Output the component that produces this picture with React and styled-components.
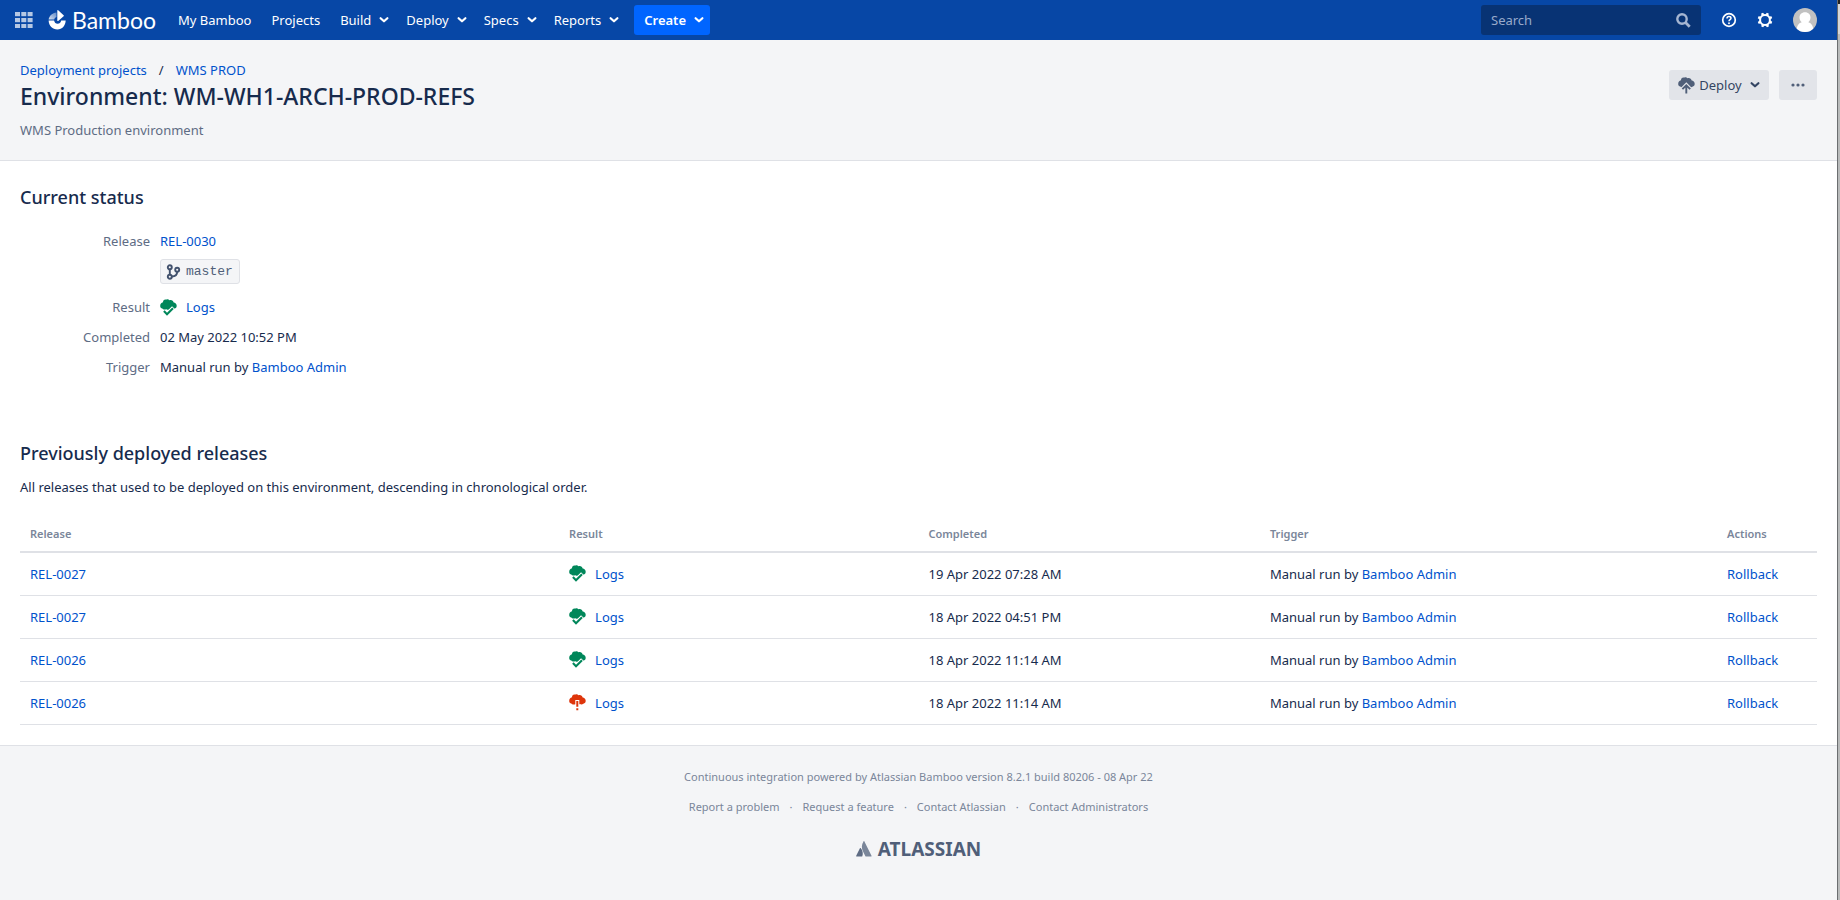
import React from 'react';
import styled, { createGlobalStyle } from 'styled-components';

const GlobalStyle = createGlobalStyle`
  body {
    margin: 0;
    background: #fff;
    color: #172b4d;
    font-family: "Noto Sans", "Open Sans", sans-serif;
    font-size: 13px;
    line-height: 20px;
  }

  * {
    box-sizing: border-box;
  }

  button, input {
    font: inherit;
  }
`;

const Frame = styled.div`
  display: flex;
  min-height: 100vh;
`;

const Page = styled.div`
  flex: 1;
  min-width: 0;
  display: flex;
  flex-direction: column;
`;

const Edge = styled.div`
  width: 3px;
  border-left: 1px solid #6b6e70;
  background: linear-gradient(#222 4px, #d5d7d8 4px, #d5d7d8 34px, #b9bbbb 34px);
`;

const Header = styled.header`
  display: flex;
  align-items: center;
  justify-content: space-between;
  height: 40px;
  padding: 0 20px 0 15px;
  background: #0747a6;
  color: #deebff;
`;

const HeaderGroup = styled.div`
  display: flex;
  align-items: center;
`;

const SwitcherButton = styled.button`
  display: flex;
  margin-right: 15px;
  padding: 0;
  border: 0;
  background: none;
`;

const Brand = styled.a`
  display: flex;
  align-items: center;
  gap: 5px;
  margin-right: 12px;
  color: #fff;
  font-family: Lato, "Open Sans", sans-serif;
  font-size: 23px;
  line-height: 30px;
  text-decoration: none;
`;

const NavLink = styled.a`
  padding: 0 10px;
  color: #fff;
  line-height: 30px;
  text-decoration: none;
`;

const NavButton = styled.button`
  display: flex;
  align-items: center;
  gap: 8px;
  height: 30px;
  margin-left: ${props => (props.$primary ? '8px' : '0')};
  padding: 0 ${props => (props.$primary ? '6px' : '7px')} 0 10px;
  border: 0;
  border-radius: 3px;
  background: ${props => (props.$primary ? '#0065ff' : 'none')};
  color: #fff;
  font-weight: ${props => (props.$primary ? 600 : 400)};
`;

const SearchBox = styled.form`
  display: flex;
  align-items: center;
  width: 220px;
  height: 30px;
  margin-right: 20px;
  padding: 0 10px;
  border-radius: 3px;
  background: #083374;
`;

const SearchInput = styled.input`
  flex: 1;
  min-width: 0;
  padding: 0;
  border: 0;
  outline: 0;
  background: none;
  color: #fff;

  &::placeholder {
    color: #99aaca;
    opacity: 1;
  }
`;

const IconButton = styled.button`
  display: flex;
  margin-right: ${props => (props.$last ? '0' : '20px')};
  padding: 0;
  border: 0;
  background: none;
  color: #fff;
`;

const PageHeader = styled.section`
  display: flex;
  justify-content: space-between;
  padding: 20px;
  border-bottom: 1px solid #dfe1e6;
  background: #f4f5f7;
`;

const Breadcrumbs = styled.nav`
  display: flex;
  gap: 12px;
`;

const Link = styled.a`
  color: #0052cc;
  text-decoration: none;
`;

const Title = styled.h1`
  margin: 1px 0 9px;
  font-size: 23px;
  font-weight: 500;
  line-height: 30px;
`;

const Muted = styled.p`
  margin: 0;
  color: #5e6c84;
`;

const Actions = styled.div`
  display: flex;
  gap: 10px;
  padding-top: 10px;
`;

const ActionButton = styled.button`
  display: flex;
  align-items: center;
  justify-content: center;
  gap: ${props => (props.$wide ? '8px' : '0')};
  width: ${props => (props.$wide ? '100px' : '38px')};
  height: 30px;
  padding: 0;
  border: 0;
  border-radius: 3px;
  background: #e2e4e9;
  color: #344563;
`;

const ButtonLabel = styled.span`
  display: flex;
  align-items: center;
  gap: 4px;
`;

const Content = styled.main`
  padding: 24px 20px 20px;
`;

const SectionTitle = styled.h2`
  margin: 0;
  font-size: 18px;
  font-weight: 500;
  line-height: 24px;
`;

const StatusList = styled.dl`
  display: grid;
  grid-template-columns: 130px 1fr;
  gap: 10px;
  margin: 22px 0 64px;
`;

const Term = styled.dt`
  color: #5e6c84;
  text-align: right;
`;

const Detail = styled.dd`
  margin: 0;
`;

const Branch = styled.div`
  display: flex;
  align-items: center;
  gap: 5px;
  width: max-content;
  height: 25px;
  margin: 8px 0 3px;
  padding: 0 6px 0 5px;
  border: 1px solid #dfe1e6;
  border-radius: 3px;
  background: #f4f5f7;
  color: #505f79;
  font-family: "Liberation Mono", monospace;
`;

const Result = styled.span`
  display: flex;
  align-items: center;
  gap: 9px;
`;

const Intro = styled.p`
  margin: 12px 0 20px;
`;

const Table = styled.table`
  width: 100%;
  border-collapse: collapse;
  table-layout: fixed;
`;

const Column = styled.col`
  width: ${props => props.$width};
`;

const HeadCell = styled.th`
  height: 35px;
  padding: 0 10px;
  border-bottom: 2px solid #dfe1e6;
  color: #7a869a;
  font-size: 11px;
  font-weight: 600;
  text-align: left;
`;

const Cell = styled.td`
  height: 43px;
  padding: 0 10px;
  border-bottom: 1px solid #dfe1e6;
`;

const Footer = styled.footer`
  display: flex;
  flex: 1;
  flex-direction: column;
  align-items: center;
  gap: 10px;
  padding-top: 21px;
  border-top: 1px solid #dfe1e6;
  background: #f4f5f7;
  color: #7a869a;
  font-size: 11px;
`;

const FooterLinks = styled.ul`
  display: flex;
  margin: 0;
  padding: 0;
  list-style: none;
`;

const FooterItem = styled.li`
  & + &::before {
    content: "·";
    padding: 0 10px;
  }
`;

const FooterLink = styled.a`
  color: inherit;
  text-decoration: none;
`;

const Atlassian = styled.a`
  display: flex;
  align-items: center;
  gap: 6px;
  margin-top: 10px;
  color: #505f79;
  font-size: 19px;
  font-weight: 700;
  line-height: 24px;
  text-decoration: none;
`;

const Chevron = () => (
  <svg width="10" height="8" viewBox="0 0 10 8" fill="none" stroke="currentColor" strokeWidth="2.2" aria-hidden="true">
    <path d="M1.6 2.2L5 5.3l3.4-3.1" strokeLinecap="round" strokeLinejoin="round" />
  </svg>
);

const SwitcherIcon = () => (
  <svg width="18" height="16" viewBox="0 0 18 16" fill="#b5c8e4">
    {[0, 6, 12].map(y => [0, 6.3, 12.6].map(x => (
      <rect key={`${x}-${y}`} x={x} y={y} width="5" height="4.2" />
    )))}
  </svg>
);

const BambooLogo = () => (
  <svg width="19" height="20" viewBox="0 0 19 20" aria-hidden="true">
    <defs>
      <linearGradient id="leaf" x1="1" y1="0" x2="0" y2="1">
        <stop offset="0" stopColor="#fff" stopOpacity="0.35" />
        <stop offset="1" stopColor="#fff" stopOpacity="0.85" />
      </linearGradient>
    </defs>
    <path d="M8.5 2.4C4.3 2.8 1.2 5.6.6 9.6h5.6c.4-1.3 1.3-2.2 2.3-2.5z" fill="url(#leaf)" />
    <path d="M.6 10.4h5.5c.3 2 1.7 3.3 3.5 3.3s3.3-1.3 3.6-3.3h4.5c-.2 5-3.5 9-8.3 9-4.9 0-8.5-3.6-8.8-9z" fill="#fff" />
    <path d="M9.3.7c0-.6.5-.8.9-.4l5.4 5c.4.3.4.7 0 1l-5.4 4.6c-.4.4-.9.1-.9-.4z" fill="#fff" />
  </svg>
);

const SearchIcon = () => (
  <svg width="15" height="15" viewBox="0 0 15 15" fill="none" stroke="#a5b5d1" strokeWidth="2.4" aria-hidden="true">
    <circle cx="6" cy="6" r="4.7" />
    <path d="M9.5 9.5l4.2 4.2" strokeWidth="2.8" />
  </svg>
);

const HelpIcon = () => (
  <svg width="16" height="16" viewBox="0 0 16 16" fill="none" stroke="currentColor" strokeWidth="1.7">
    <circle cx="8" cy="8" r="6.3" />
    <path d="M6 6.5c0-1.2.9-1.9 2-1.9s2 .7 2 1.7c0 1.3-2 1.4-2 2.9" strokeWidth="1.5" />
    <circle cx="8" cy="11.2" r=".95" fill="currentColor" stroke="none" />
  </svg>
);

const GearIcon = () => (
  <svg width="16" height="16" viewBox="0 0 16 16" fill="none" stroke="currentColor">
    <circle cx="8" cy="8" r="4.9" strokeWidth="2" />
    {[0, 45, 90, 135, 180, 225, 270, 315].map(angle => (
      <path key={angle} d="M6.4 2.8L7 .6h2l.6 2.2z" fill="currentColor" stroke="none" transform={`rotate(${angle + 22} 8 8)`} />
    ))}
  </svg>
);

const Avatar = () => (
  <svg width="24" height="24" viewBox="0 0 24 24">
    <defs>
      <clipPath id="avatar"><circle cx="12" cy="12" r="12" /></clipPath>
    </defs>
    <g clipPath="url(#avatar)">
      <rect width="24" height="24" fill="#c1c1c1" />
      <path d="M12 4.2c3.4 0 5.500 2.300 5.500 5.400 0 2-.9 3.700-2.200 4.600 3.300.9 5.200 4 5.400 9.800H3.300c.2-5.800 2.100-8.900 5.400-9.800-1.300-.9-2.200-2.600-2.200-4.600 0-3.100 2.100-5.400 5.500-5.400z" fill="#fff" />
    </g>
  </svg>
);

const cloud = 'M3 3.300C2.900 1.500 4.400.1 6.100.7 7.200-.1 8.700.2 9.400 1.200c2.200-.6 4 .4 4 2.100 1.900.3 3.300 1.700 3.300 3.500 0 1.700-.9 2.700-2.300 2.900-1 .8-2.400.9-3.400.4-1.300.8-3.400.8-4.600.1-1.600.8-3.500.4-4-.7C1 9.200.2 8.300.2 6.900c0-1.900 1.100-3.200 2.800-3.600z';

const SuccessIcon = () => (
  <svg width="17" height="17" viewBox="0 0 17 17" fill="none" role="img" aria-label="Successful">
    <path d={cloud} fill="#00875a" />
    <path d="M3.900 12.300L7 15.400l6.600-6.600" stroke="#fff" strokeWidth="4.400" />
    <path d="M3.900 12.100L7 15.200l6-6" stroke="#00875a" strokeWidth="2.100" />
  </svg>
);

const FailedIcon = () => (
  <svg width="17" height="17" viewBox="0 0 17 17" fill="none" role="img" aria-label="Failed">
    <path d={cloud} fill="#de350b" />
    <path d="M8.300 6V17" stroke="#fff" strokeWidth="4" />
    <path d="M8.300 7v5.700M8.300 14.200v2" stroke="#de350b" strokeWidth="2" />
  </svg>
);

const DeployIcon = () => (
  <svg width="17" height="17" viewBox="0 0 17 17" fill="none" stroke="#505f79" aria-hidden="true">
    <path d={cloud} fill="#505f79" stroke="none" />
    <path d="M4.100 12.400l4.200-4.200 4.200 4.200M8.300 9v8" stroke="#e2e4e9" strokeWidth="4" />
    <path d="M4.400 12.200l3.900-3.900 3.900 3.900M8.300 9v7.500" strokeWidth="1.900" />
  </svg>
);

const BranchIcon = () => (
  <svg width="15" height="16" viewBox="0 0 15 16" fill="none" stroke="#42526e" strokeWidth="1.9" aria-hidden="true">
    <circle cx="3.8" cy="3.3" r="2" />
    <circle cx="3.8" cy="12.7" r="2" />
    <circle cx="11.2" cy="5.7" r="2" />
    <path d="M3.8 5.3v5.4M11.2 7.7c0 3-1.6 4.6-5.4 4.8" />
  </svg>
);

const MoreIcon = () => (
  <svg width="14" height="4" viewBox="0 0 14 4" fill="#505f79">
    <circle cx="2" cy="2" r="1.6" />
    <circle cx="7" cy="2" r="1.6" />
    <circle cx="12" cy="2" r="1.6" />
  </svg>
);

const AtlassianMark = () => (
  <svg width="16" height="16" viewBox="0 0 16 16" aria-hidden="true">
    <path d="M4.8 7.2c-.3-.4-.7-.3-.9.1L.2 14.8c-.2.4.1.7.4.7h5.200c.2 0 .4-.1.5-.3 1.100-2.300.4-5.800-1.500-8z" fill="#5e6c84" />
    <path d="M7.500.4c-2.100 3.300-2 7-.6 9.800l2.500 5c.1.200.3.300.5.300h5.200c.4 0 .6-.4.400-.7L8.400.4c-.2-.4-.7-.4-.9 0z" fill="#7a869a" />
  </svg>
);

const releases = [
  { name: 'REL-0027', completed: '19 Apr 2022 07:28 AM', ok: true },
  { name: 'REL-0027', completed: '18 Apr 2022 04:51 PM', ok: true },
  { name: 'REL-0026', completed: '18 Apr 2022 11:14 AM', ok: true },
  { name: 'REL-0026', completed: '18 Apr 2022 11:14 AM', ok: false },
];

const menus = ['Build', 'Deploy', 'Specs', 'Reports'];

const footerLinks = ['Report a problem', 'Request a feature', 'Contact Atlassian', 'Contact Administrators'];

const DeployResult = ({ ok }) => (
  <Result>
    {ok ? <SuccessIcon /> : <FailedIcon />}
    <Link href="#logs">Logs</Link>
  </Result>
);

const ManualRun = () => (
  <React.Fragment>
    Manual run by <Link href="#admin">Bamboo Admin</Link>
  </React.Fragment>
);

const AppHeader = () => (
  <Header>
    <HeaderGroup as="nav">
      <SwitcherButton aria-label="Linked applications"><SwitcherIcon /></SwitcherButton>
      <Brand href="#home"><BambooLogo />Bamboo</Brand>
      <NavLink href="#my">My Bamboo</NavLink>
      <NavLink href="#projects">Projects</NavLink>
      {menus.map(menu => (
        <NavButton key={menu}>{menu}<Chevron /></NavButton>
      ))}
      <NavButton $primary>Create<Chevron /></NavButton>
    </HeaderGroup>
    <HeaderGroup>
      <SearchBox role="search">
        <SearchInput type="text" placeholder="Search" aria-label="Search" />
        <SearchIcon />
      </SearchBox>
      <IconButton aria-label="Help"><HelpIcon /></IconButton>
      <IconButton aria-label="Administration"><GearIcon /></IconButton>
      <IconButton $last aria-label="User profile"><Avatar /></IconButton>
    </HeaderGroup>
  </Header>
);

export default function App() {
  return (
    <Frame>
      <GlobalStyle />
      <Page>
        <AppHeader />
        <PageHeader>
          <div>
            <Breadcrumbs>
              <Link href="#deployments">Deployment projects</Link>
              <span>/</span>
              <Link href="#wms">WMS PROD</Link>
            </Breadcrumbs>
            <Title>Environment: WM-WH1-ARCH-PROD-REFS</Title>
            <Muted>WMS Production environment</Muted>
          </div>
          <Actions>
            <ActionButton $wide>
              <ButtonLabel><DeployIcon />Deploy</ButtonLabel>
              <Chevron />
            </ActionButton>
            <ActionButton aria-label="More actions"><MoreIcon /></ActionButton>
          </Actions>
        </PageHeader>
        <Content>
          <SectionTitle>Current status</SectionTitle>
          <StatusList>
            <Term>Release</Term>
            <Detail>
              <Link href="#rel-0030">REL-0030</Link>
              <Branch><BranchIcon />master</Branch>
            </Detail>
            <Term>Result</Term>
            <Detail><DeployResult ok /></Detail>
            <Term>Completed</Term>
            <Detail>02 May 2022 10:52 PM</Detail>
            <Term>Trigger</Term>
            <Detail><ManualRun /></Detail>
          </StatusList>
          <SectionTitle>Previously deployed releases</SectionTitle>
          <Intro>All releases that used to be deployed on this environment, descending in chronological order.</Intro>
          <Table>
            <colgroup>
              <Column $width="30%" />
              <Column $width="20%" />
              <Column $width="19%" />
              <Column $width="auto" />
              <Column $width="100px" />
            </colgroup>
            <thead>
              <tr>
                <HeadCell>Release</HeadCell>
                <HeadCell>Result</HeadCell>
                <HeadCell>Completed</HeadCell>
                <HeadCell>Trigger</HeadCell>
                <HeadCell>Actions</HeadCell>
              </tr>
            </thead>
            <tbody>
              {releases.map((release, index) => (
                <tr key={index}>
                  <Cell><Link href="#release">{release.name}</Link></Cell>
                  <Cell><DeployResult ok={release.ok} /></Cell>
                  <Cell>{release.completed}</Cell>
                  <Cell><ManualRun /></Cell>
                  <Cell><Link href="#rollback">Rollback</Link></Cell>
                </tr>
              ))}
            </tbody>
          </Table>
        </Content>
        <Footer>
          <span>Continuous integration powered by Atlassian Bamboo version 8.2.1 build 80206 - 08 Apr 22</span>
          <FooterLinks>
            {footerLinks.map(label => (
              <FooterItem key={label}><FooterLink href="#contact">{label}</FooterLink></FooterItem>
            ))}
          </FooterLinks>
          <Atlassian href="#atlassian"><AtlassianMark />ATLASSIAN</Atlassian>
        </Footer>
      </Page>
      <Edge />
    </Frame>
  );
}
